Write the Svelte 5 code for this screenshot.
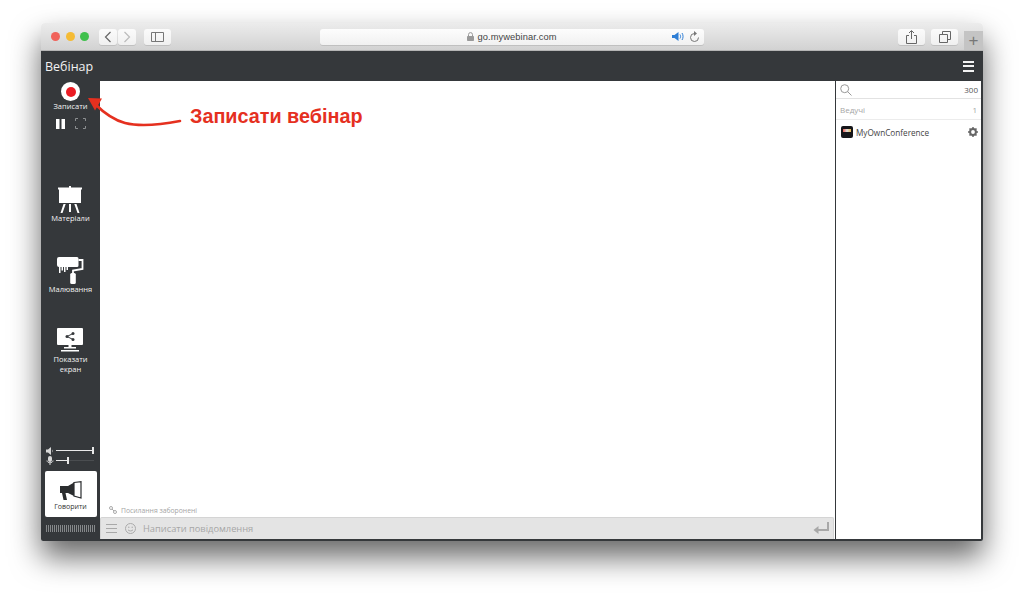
<script>
  const tools = [
    { id: 'board', label: ['Матеріали'] },
    { id: 'roller', label: ['Малювання'] },
    { id: 'screen', label: ['Показати', 'екран'] }
  ];
</script>

<div class="page">
  <div class="window">
    <header class="toolbar">
      <div class="lights">
        <span class="light red"></span>
        <span class="light yellow"></span>
        <span class="light green"></span>
      </div>
      <div class="navs">
        <button class="tbtn nav">
          <svg width="8" height="12" viewBox="0 0 8 12"><path d="M6.5 1 1.5 6l5 5" fill="none" stroke="#666" stroke-width="1.2" /></svg>
        </button>
        <button class="tbtn nav">
          <svg width="8" height="12" viewBox="0 0 8 12"><path d="M1.5 1l5 5-5 5" fill="none" stroke="#bbb" stroke-width="1.2" /></svg>
        </button>
      </div>
      <button class="tbtn side">
        <svg width="13" height="10" viewBox="0 0 13 10"><path d="M.5.5h12v9H.5zM4.5.5v9" fill="none" stroke="#777" /></svg>
      </button>
      <div class="address">
        <span class="host">
          <svg width="7" height="9" viewBox="0 0 7 9"><path d="M1.5 4V2.6a2 2 0 0 1 4 0V4" fill="none" stroke="#999" /><rect y="4" width="7" height="5" rx=".8" fill="#999" /></svg>
          go.mywebinar.com
        </span>
        <span class="addr-icons">
          <svg width="13" height="9" viewBox="0 0 13 9"><path d="M0 3h2.500L6.500 0v9L2.500 6H0z" fill="#2f7fd6" /><path d="M8 2.500c.8 1.200.8 2.800 0 4M10 1c1.400 2 1.400 5 0 7" fill="none" stroke="#2f7fd6" /></svg>
          <svg width="11" height="12" viewBox="0 0 11 12"><path d="M5.500 2.500a4 4 0 1 0 4 4" fill="none" stroke="#777" /><path d="M5 0l3 2.500L5 5z" fill="#777" /></svg>
        </span>
      </div>
      <button class="tbtn share">
        <svg width="11" height="14" viewBox="0 0 11 14"><path d="M3 5.500H.5v8h10v-8H8M5.500 9V1M3 3l2.500-2.500L8 3" fill="none" stroke="#666" /></svg>
      </button>
      <button class="tbtn copy">
        <svg width="12" height="12" viewBox="0 0 12 12"><path d="M3.500 3V.5h8v8H9M.5 3.500h8v8h-8z" fill="none" stroke="#666" /></svg>
      </button>
      <div class="newtab">+</div>
    </header>

    <div class="appbar">
      <span class="title">Вебінар</span>
      <span class="burger"><i></i><i></i><i></i></span>
    </div>

    <div class="body">
      <aside class="sidebar">
        <div class="rec">
          <span class="rec-btn"><i></i></span>
          <span class="label">Записати</span>
        </div>
        <div class="rec-tools">
          <svg width="9" height="10" viewBox="0 0 9 10"><path d="M0 0h3.500v10H0zM5.500 0H9v10H5.500z" fill="#fff" /></svg>
          <svg width="11" height="11" viewBox="0 0 11 11"><path d="M.5 3V.5H3M8 .5h2.500V3M10.500 8v2.500H8M3 10.500H.5V8" fill="none" stroke="#8b8e90" /></svg>
        </div>

        <div class="tools">
          {#each tools as tool}
            <div class="tool">
              {#if tool.id === 'board'}
                <svg width="24" height="27" viewBox="0 0 24 27">
                  <path d="M11 0h2v2h-2z" fill="#fff" />
                  <path d="M0 1.500h24v2h-1V17H1V3.500H0z" fill="#fff" />
                  <path d="M5.500 18h2.200L4.500 27H2.500zM16.300 18h2.200l3 9h-2zM11 18h2v8h-2z" fill="#fff" />
                </svg>
              {:else if tool.id === 'roller'}
                <svg width="27" height="27" viewBox="0 0 27 27">
                  <path d="M2 0h18a1.500 1.500 0 0 1 1.500 1.500v7A1.500 1.500 0 0 1 20 10H11v3H9.500v-3h-1v5H7v-5H6v3.500H4.500V10h-1v6H2v-6A2 2 0 0 1 0 8V2a2 2 0 0 1 2-2z" fill="#fff" />
                  <path d="M21.500 3h4v9l-9.500 1.500v3" fill="none" stroke="#fff" stroke-width="1.800" />
                  <rect x="13.200" y="16" width="5.600" height="11" rx="1.500" fill="#fff" />
                </svg>
              {:else}
                <svg class="monitor" width="26" height="24" viewBox="0 0 26 24">
                  <rect width="26" height="17" rx="1" fill="#fff" />
                  <path d="M7 19h12v1.500H7zM4 22h18v1.500H4zM11.500 17h3v3h-3z" fill="#fff" />
                  <circle cx="10" cy="8.500" r="1.500" fill="#35383b" />
                  <circle cx="16" cy="5.500" r="1.500" fill="#35383b" />
                  <circle cx="16" cy="11.500" r="1.500" fill="#35383b" />
                  <path d="M16 5.500l-6 3 6 3" fill="none" stroke="#35383b" />
                </svg>
              {/if}
              <span class="label">
                {#each tool.label as line}<span class="line">{line}</span>{/each}
              </span>
            </div>
          {/each}
        </div>

        <div class="sliders">
          <div class="slider">
            <svg width="8" height="8" viewBox="0 0 8 8"><path d="M0 2.500h2L5 0v8L2 5.500H0zM6 2.500c.8 1 .8 2 0 3" fill="#d8d8d8" /></svg>
            <span class="track"><i class="fill full"></i><b></b></span>
          </div>
          <div class="slider">
            <svg width="8" height="9" viewBox="0 0 8 9"><rect x="2" width="4" height="6" rx="2" fill="#d8d8d8" /><path d="M1 4.500c0 3 6 3 6 0M4 7v2" fill="none" stroke="#d8d8d8" /></svg>
            <span class="track"><i class="fill low"></i><b class="low-knob"></b></span>
          </div>
        </div>

        <button class="talk">
          <svg width="22" height="20" viewBox="0 0 22 20">
            <path d="M0 5h8l6-3.500V15l-6-3H5.500L7 19H3.500L2 12H0z" fill="#2b2d2f" />
            <path d="M14 1.500 21 .7V17l-7-2z" fill="none" stroke="#2b2d2f" stroke-width="1.200" />
          </svg>
          <span>Говорити</span>
        </button>
        <div class="meter"></div>
      </aside>

      <main class="center">
        <div class="canvas"></div>
        <div class="links">
          <svg width="8" height="8" viewBox="0 0 8 8"><circle cx="2" cy="2" r="1.500" fill="none" stroke="#aaa" /><circle cx="6" cy="6" r="1.500" fill="none" stroke="#aaa" /><path d="M3 3l2 2" stroke="#aaa" /></svg>
          Посилання заборонені
        </div>
        <div class="composer">
          <span class="lines"><i></i><i></i><i></i></span>
          <svg class="smile" width="11" height="11" viewBox="0 0 11 11">
            <circle cx="5.500" cy="5.500" r="5" fill="none" stroke="#aaa" />
            <circle cx="3.800" cy="4.200" r=".7" fill="#aaa" />
            <circle cx="7.200" cy="4.200" r=".7" fill="#aaa" />
            <path d="M3 6.800c1 1.500 4 1.500 5 0" fill="none" stroke="#aaa" />
          </svg>
          <span class="placeholder">Написати повідомлення</span>
          <svg class="enter" width="16" height="13" viewBox="0 0 16 13">
            <path d="M15 0v8H3" fill="none" stroke="#a8a8a8" stroke-width="2" />
            <path d="M5.500 4 .5 8l5 4z" fill="#a8a8a8" />
          </svg>
        </div>
      </main>

      <aside class="panel">
        <div class="search">
          <svg width="12" height="12" viewBox="0 0 12 12"><circle cx="4.700" cy="4.700" r="4" fill="none" stroke="#999" /><path d="M7.500 7.500l4 4" stroke="#999" /></svg>
          <span>300</span>
        </div>
        <div class="section"><span>Ведучі</span><span>1</span></div>
        <div class="user">
          <span class="avatar"><i></i></span>
          <span class="name">MyOwnConference</span>
          <svg width="10" height="10" viewBox="0 0 10 10">
            <circle cx="5" cy="5" r="2.900" fill="none" stroke="#666" stroke-width="2" />
            <path d="M5 0v2M5 8v2M0 5h2M8 5h2M1.500 1.500l1.400 1.400M7.100 7.100l1.400 1.400M8.500 1.500 7.100 2.900M2.900 7.100 1.500 8.500" stroke="#666" stroke-width="1.500" />
          </svg>
        </div>
      </aside>
    </div>

    <!-- annotation drawn over the page -->
    <svg class="arrow" width="110" height="40" viewBox="0 0 110 40">
      <path d="M99 28C78 32 60 34 44 30 33 27 24 21 14 11" fill="none" stroke="#e5301f" stroke-width="2.600" stroke-linecap="round" />
      <path d="M7 5l14 .5-7 12z" fill="#e5301f" />
    </svg>
    <span class="callout">Записати вебінар</span>
  </div>
</div>

<style>
  :global(body) {
    margin: 0;
    background: #fff;
    font-family: 'Open Sans', 'Liberation Sans', sans-serif;
  }

  .page {
    box-sizing: border-box;
    width: 1024px;
    height: 600px;
    padding: 23px 41px 59px;
    overflow: hidden;
  }

  .window {
    position: relative;
    box-sizing: border-box;
    width: 942px;
    height: 518px;
    display: flex;
    flex-direction: column;
    border-radius: 4px 4px 2px 2px;
    box-shadow: 0 16px 30px rgba(0, 0, 0, 0.6);
  }

  .toolbar {
    height: 28px;
    flex: none;
    display: flex;
    align-items: center;
    padding-left: 10px;
    background: linear-gradient(#ececec, #d2d2d2);
    border-radius: 4px 4px 0 0;
    border-bottom: 1px solid #b5b5b5;
    box-sizing: border-box;
  }

  .lights {
    display: flex;
    flex: none;
    gap: 5.500px;
    width: 38px;
  }

  .light {
    width: 9px;
    height: 9px;
    border-radius: 50%;
  }

  .red { background: #f0625a; }
  .yellow { background: #f5bb34; }
  .green { background: #3fc04c; }

  button {
    padding: 0;
    border: 0;
    font: inherit;
  }

  .tbtn {
    display: flex;
    flex: none;
    align-items: center;
    justify-content: center;
    height: 16px;
    background: linear-gradient(#fbfbfb, #f0f0f0);
    border-radius: 3px;
    box-shadow: 0 1px 0 #c0c0c0;
  }

  .navs {
    display: flex;
    flex: none;
    gap: 1px;
    margin-left: 10px;
  }

  .nav { width: 18px; }

  .side {
    width: 27px;
    margin-left: 8px;
  }

  .address {
    position: relative;
    flex: none;
    width: 384px;
    height: 16px;
    margin-left: 149px;
    display: flex;
    align-items: center;
    justify-content: center;
    background: linear-gradient(#fdfdfd, #f1f1f1);
    border-radius: 3px;
    box-shadow: 0 1px 0 #c0c0c0;
  }

  .host {
    display: flex;
    align-items: center;
    gap: 3px;
    font-family: 'Liberation Sans', sans-serif;
    font-size: 9.300px;
    color: #444;
    letter-spacing: 0.1px;
  }

  .addr-icons {
    position: absolute;
    right: 4px;
    top: 2px;
    display: flex;
    align-items: center;
    gap: 4px;
  }

  .share {
    width: 27px;
    margin-left: 194px;
  }

  .copy {
    width: 27px;
    margin-left: 6px;
  }

  .newtab {
    flex: none;
    width: 19px;
    height: 19px;
    margin-left: 6px;
    align-self: flex-end;
    background: #c4c4c4;
    color: #777;
    font: 300 17px/20px 'Liberation Sans', sans-serif;
    text-align: center;
  }

  .appbar {
    height: 30px;
    flex: none;
    display: flex;
    align-items: center;
    justify-content: space-between;
    padding: 0 9px 0 4px;
    background: #35383b;
  }

  .title {
    font-size: 12.500px;
    color: #f2f2f2;
  }

  .burger {
    display: flex;
    flex-direction: column;
    gap: 2.500px;
    width: 11px;
  }

  .burger i {
    height: 2px;
    background: #f2f2f2;
  }

  .body {
    flex: 1;
    display: flex;
    min-height: 0;
    background: #35383b;
    border-radius: 0 0 2px 2px;
  }

  .sidebar {
    width: 59px;
    flex: none;
    display: flex;
    flex-direction: column;
    align-items: center;
    color: #fff;
  }

  .rec {
    display: flex;
    flex-direction: column;
    align-items: center;
    margin-top: 1px;
  }

  .rec-btn {
    width: 19px;
    height: 19px;
    display: flex;
    align-items: center;
    justify-content: center;
    background: #fff;
    border-radius: 50%;
  }

  .rec-btn i {
    width: 10px;
    height: 10px;
    border-radius: 50%;
    background: #ea1c24;
  }

  .label {
    font-size: 7.500px;
    line-height: 10px;
    text-align: center;
    color: #f2f2f2;
  }

  .line { display: block; }

  .rec-tools {
    display: flex;
    align-items: center;
    gap: 10px;
    margin-top: 7px;
  }

  .tools {
    display: flex;
    flex-direction: column;
    align-items: center;
    margin-top: 57px;
    gap: 34px;
  }

  .tool {
    display: flex;
    flex-direction: column;
    align-items: center;
  }

  .monitor { margin-bottom: 2px; }

  .sliders {
    margin-top: auto;
    box-sizing: border-box;
    width: 50px;
    padding-right: 2px;
    display: flex;
    flex-direction: column;
    gap: 1px;
    margin-bottom: 6px;
  }

  .slider {
    display: flex;
    align-items: center;
    gap: 2px;
    height: 9px;
  }

  .track {
    position: relative;
    flex: 1;
    height: 1px;
    background: #4a4d50;
  }

  .fill {
    position: absolute;
    left: 0;
    top: 0;
    height: 1px;
    background: #e8e8e8;
  }

  .full { width: 100%; }
  .low { width: 30%; }

  .track b {
    position: absolute;
    right: 0;
    top: -3px;
    width: 2px;
    height: 7px;
    background: #e8e8e8;
  }

  .track .low-knob {
    right: auto;
    left: 30%;
  }

  .talk {
    width: 52px;
    height: 46px;
    flex: none;
    display: flex;
    flex-direction: column;
    align-items: center;
    gap: 1px;
    padding-top: 10px;
    box-sizing: border-box;
    background: #fff;
    border-radius: 2px;
    font-size: 7px;
    line-height: 9px;
    color: #333;
  }

  .meter {
    width: 50px;
    height: 7px;
    margin: 8px 0 9px;
    background: repeating-linear-gradient(90deg, #85888a 0 1px, #35383b 1px 2px);
    flex: none;
  }

  .center {
    flex: 1;
    min-width: 0;
    display: flex;
    flex-direction: column;
    background: #fff;
    border-bottom: 2px solid #35383b;
    box-sizing: border-box;
    padding-right: 1px;
  }

  .canvas { flex: 1; }

  .links {
    height: 10px;
    display: flex;
    align-items: center;
    gap: 4px;
    padding: 0 0 2px 9px;
    font-size: 6.800px;
    color: #a5a5a5;
  }

  .composer {
    height: 22px;
    flex: none;
    display: flex;
    align-items: center;
    padding: 0 4px 0 5px;
    background: #e4e4e4;
    border: 1px solid #d4d4d4;
    border-bottom: 0;
    box-sizing: border-box;
    border-radius: 2px 2px 0 0;
  }

  .lines {
    display: flex;
    flex-direction: column;
    gap: 3px;
    width: 11px;
  }

  .lines i {
    height: 1px;
    background: #a8a8a8;
  }

  .smile { margin-left: 8px; }

  .placeholder {
    margin-left: 7px;
    font-size: 9.300px;
    color: #a6a6a6;
  }

  .enter { margin-left: auto; }

  .panel {
    width: 145px;
    flex: none;
    margin: 0 2px 2px 1px;
    background: #fff;
    display: flex;
    flex-direction: column;
    font-size: 8px;
    color: #555;
  }

  .search {
    height: 17px;
    display: flex;
    align-items: center;
    justify-content: space-between;
    padding: 0 3px 0 4px;
    border-bottom: 1px solid #e2e2e2;
  }

  .section {
    height: 20px;
    display: flex;
    align-items: center;
    justify-content: space-between;
    padding: 0 4px;
    color: #a5a5a5;
    border-bottom: 1px solid #ececec;
  }

  .user {
    height: 24px;
    display: flex;
    align-items: center;
    padding: 0 3px 0 5px;
  }

  .avatar {
    width: 12px;
    height: 12px;
    border-radius: 2px;
    background: #16161a;
    display: flex;
    align-items: center;
    justify-content: center;
  }

  .avatar i {
    width: 8px;
    height: 3px;
    margin-top: -3px;
    background: linear-gradient(90deg, #e85a4f, #ddd 50%, #e8b64a);
  }

  .name {
    margin-left: 3px;
    flex: 1;
    font-size: 8.200px;
    color: #444;
  }

  .arrow {
    position: absolute;
    left: 40px;
    top: 70px;
  }

  .callout {
    position: absolute;
    left: 149px;
    top: 82px;
    font-family: 'Liberation Sans', sans-serif;
    font-weight: 700;
    font-size: 19.800px;
    line-height: 22px;
    color: #e5301f;
  }
</style>
